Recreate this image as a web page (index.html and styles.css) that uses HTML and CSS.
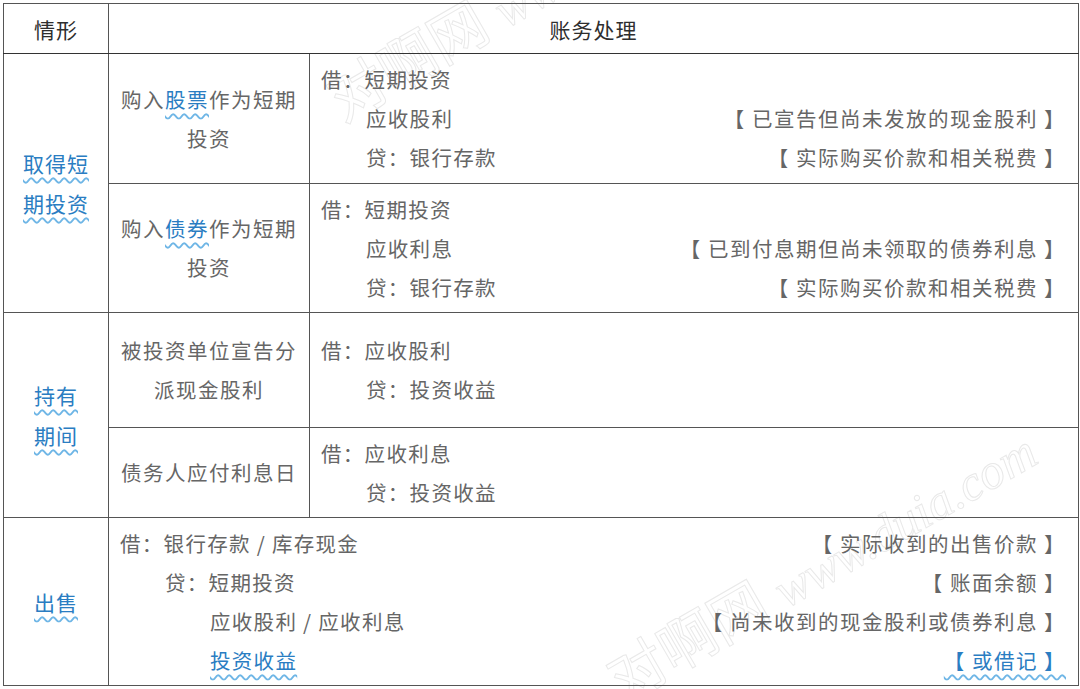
FILE: index.html
```html
<!DOCTYPE html>
<html lang="zh-CN">
<head>
<meta charset="utf-8">
<title>短期投资账务处理</title>
<link rel="stylesheet" href="styles.css">
</head>
<body>
<div class="page">
  <table class="acct">
    <colgroup>
      <col class="c1"><col class="c2"><col class="c3">
    </colgroup>
    <tr class="r-head">
      <th>情形</th>
      <th colspan="2">账务处理</th>
    </tr>
    <tr class="r1">
      <td class="sit" rowspan="2"><span class="hl">取得短</span><br><span class="hl">期投资</span></td>
      <td class="case">购入<span class="hl">股票</span>作为短期<br>投资</td>
      <td class="entry">
        <div class="ln"><span>借：短期投资</span></div>
        <div class="ln in1"><span>应收股利</span><span class="note">【 已宣告但尚未发放的现金股利 】</span></div>
        <div class="ln in1"><span>贷：银行存款</span><span class="note">【 实际购买价款和相关税费 】</span></div>
      </td>
    </tr>
    <tr class="r2">
      <td class="case">购入<span class="hl">债券</span>作为短期<br>投资</td>
      <td class="entry">
        <div class="ln"><span>借：短期投资</span></div>
        <div class="ln in1"><span>应收利息</span><span class="note">【 已到付息期但尚未领取的债券利息 】</span></div>
        <div class="ln in1"><span>贷：银行存款</span><span class="note">【 实际购买价款和相关税费 】</span></div>
      </td>
    </tr>
    <tr class="r3">
      <td class="sit" rowspan="2"><span class="hl">持有</span><br><span class="hl">期间</span></td>
      <td class="case">被投资单位宣告分<br>派现金股利</td>
      <td class="entry">
        <div class="ln"><span>借：应收股利</span></div>
        <div class="ln in1"><span>贷：投资收益</span></div>
      </td>
    </tr>
    <tr class="r4">
      <td class="case">债务人应付利息日</td>
      <td class="entry">
        <div class="ln"><span>借：应收利息</span></div>
        <div class="ln in1"><span>贷：投资收益</span></div>
      </td>
    </tr>
    <tr class="r5">
      <td class="sit"><span class="hl">出售</span></td>
      <td class="entry wide" colspan="2">
        <div class="ln"><span>借：银行存款 / 库存现金</span><span class="note">【 实际收到的出售价款 】</span></div>
        <div class="ln in1"><span>贷：短期投资</span><span class="note">【 账面余额 】</span></div>
        <div class="ln in2"><span>应收股利 / 应收利息</span><span class="note">【 尚未收到的现金股利或债券利息 】</span></div>
        <div class="ln in2"><span class="hl">投资收益</span><span class="note hl">【 或借记 】</span></div>
      </td>
    </tr>
  </table>
  <div class="wm wm-top" aria-hidden="true">对啊网 <span class="wm-latin">www.duia.com</span></div>
  <div class="wm wm-bottom" aria-hidden="true">对啊网 <span class="wm-latin">www.duia.com</span></div>
</div>
</body>
</html>
```

FILE: styles.css
```css
html, body {
  margin: 0;
  padding: 0;
  background: #ffffff;
}

.page {
  position: relative;
  width: 1080px;
  height: 689px;
  overflow: hidden;
  padding: 3px 0 0 3px;
  box-sizing: border-box;
  font-family: "Noto Sans CJK SC", "Noto Sans", sans-serif;
}

.acct {
  position: relative;
  z-index: 1;
  border-collapse: collapse;
  table-layout: fixed;
  width: 1075px;
  border: 1.5px solid #3a3a3a;
}

.c1 { width: 105px; }
.c2 { width: 201px; }
.c3 { width: 769px; }

.acct th,
.acct td {
  border: 1px solid #555555;
  padding: 0;
  vertical-align: middle;
}

.acct tr + tr td { border-top: 1.5px solid #8a8a8a; }

.acct th {
  font-size: 21px;
  font-weight: normal;
  color: #2e2e2e;
  letter-spacing: 1px;
  text-align: center;
  border-bottom: 1.5px solid #333333;
}

.r-head { height: 50px; }
.r1 { height: 130px; }
.r2 { height: 129px; }
.r3 { height: 115px; }
.r4 { height: 90px; }
.r5 { height: 168px; }

.sit {
  text-align: center;
  font-size: 21px;
  line-height: 40px;
  letter-spacing: 1px;
}

.case {
  text-align: center;
  font-size: 20.5px;
  line-height: 39px;
  letter-spacing: 1.5px;
  color: #666666;
}

.entry {
  font-size: 20.5px;
  line-height: 39px;
  letter-spacing: 1.3px;
  color: #666666;
  padding: 0 12px 0 11px !important;
}

.ln {
  display: flex;
  justify-content: space-between;
  white-space: nowrap;
}

.in1 { padding-left: 45px; }
.in2 { padding-left: 90px; }

.note { letter-spacing: 1.5px; }

.hl {
  color: #2a7dc2;
  text-decoration: underline wavy #6fb6e6;
  text-decoration-thickness: 1.5px;
  text-underline-offset: 5px;
}

.wm {
  position: absolute;
  z-index: 0;
  font-family: "Liberation Serif", serif;
  font-size: 58px;
  line-height: 1.15;
  color: transparent;
  -webkit-text-stroke: 1px #e9e9e9;
  white-space: nowrap;
  transform-origin: 0 0;
  transform: rotate(-30deg);
  pointer-events: none;
}

.wm-latin {
  font-size: 50px;
  font-style: italic;
}

.wm-top { left: 317px; top: 78px; }
.wm-bottom { left: 597px; top: 658px; }
```
